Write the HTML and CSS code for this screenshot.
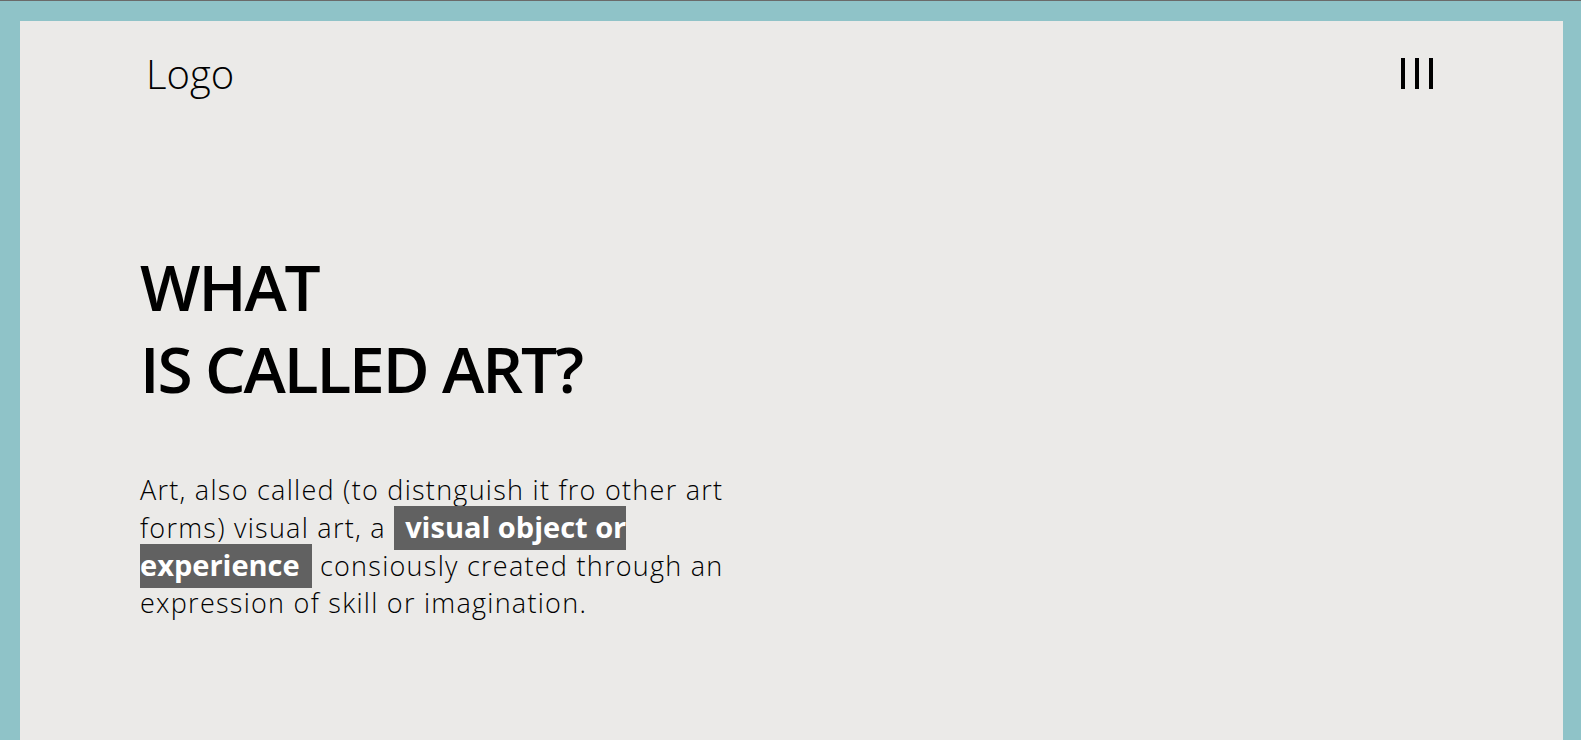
FILE: index.html
```html
<!DOCTYPE html>
<html lang="en">
<head>
<meta charset="utf-8">
<title>What is called art?</title>
<link rel="stylesheet" href="styles.css">
</head>
<body>
  <div class="frame">
    <div class="panel">
      <header class="header">
        <div class="logo">Logo</div>
        <div class="menu" aria-label="Menu">
          <span class="bar"></span>
          <span class="bar"></span>
          <span class="bar"></span>
        </div>
      </header>
      <main class="hero">
        <h1 class="title">WHAT<br>IS CALLED ART?</h1>
        <p class="lead">Art, also called (to distnguish it fro other art forms) visual art, a <span class="hl">visual object or experience</span> consiously created through an expression of skill or imagination.</p>
      </main>
    </div>
  </div>
</body>
</html>
```

FILE: styles.css
```css
html, body {
  margin: 0;
  padding: 0;
  height: 100%;
}

body {
  background: #8fc3c8;
  font-family: "Open Sans", "Noto Sans", sans-serif;
  color: #000;
  overflow: hidden;
}

.frame {
  border-top: 1px solid #6a6a6a;
  padding: 20px 18px 0 20px;
  min-height: 100%;
  box-sizing: border-box;
}

.panel {
  background: #ebeae8;
  min-height: 760px;
}

.header {
  display: flex;
  justify-content: space-between;
  align-items: center;
  padding: 25px 130px 0 126px;
}

.logo {
  font-size: 40px;
  font-weight: 300;
  color: #000;
}

.menu {
  display: flex;
  gap: 10px;
}

.bar {
  display: block;
  width: 4px;
  height: 31px;
  background: #000;
}

.hero {
  padding: 145px 0 0 120px;
}

.title {
  margin: 0;
  font-size: 64px;
  line-height: 82px;
  font-weight: 600;
  letter-spacing: -2.1px;
  color: #000;
}

.lead {
  margin: 61px 0 0 0;
  max-width: 620px;
  font-size: 27px;
  line-height: 37px;
  font-weight: 300;
  letter-spacing: 1.26px;
  color: #000;
}

.hl {
  background: #616161;
  color: #fff;
  font-weight: 700;
  font-size: 29px;
  letter-spacing: 0;
  padding: 1px 12px 4px 11px;
}
```
